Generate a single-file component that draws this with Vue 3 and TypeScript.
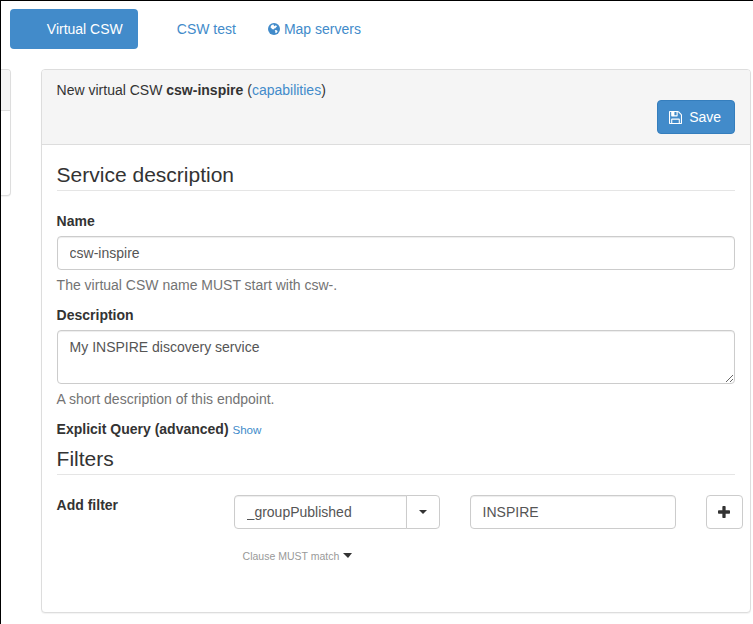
<script setup lang="ts">
import { ref } from 'vue'

const name = ref('csw-inspire')
const description = ref('My INSPIRE discovery service')
const filterField = ref('_groupPublished')
const filterValue = ref('INSPIRE')
</script>

<template>
  <div class="page">
    <nav class="pills">
      <a class="pill active">Virtual CSW</a>
      <a class="pill">CSW test</a>
      <a class="pill maps">
        <svg class="globe" viewBox="0 0 12 12">
          <circle cx="6" cy="6" r="6" fill="#428bca" />
          <path
            d="M3.400 2.200 5 1.400 6.200 1.900 5.600 2.700 6.500 3.200 7.200 2.400 8.300 2.600 9 3.800 8 4.200 7.500 5.200 6.200 5.400 5.600 6.500 4.700 5.900 4 6.400 3.600 5.200 2.500 4.500 2.800 3.200ZM6.700 7.300 8.100 7.100 9.600 7.900 9.300 9.100 8 10.200 7.300 9.800 7.300 8.500Z"
            fill="#fff"
          />
        </svg>
        Map servers
      </a>
    </nav>

    <div class="columns">
      <aside class="panel side">
        <div class="side-heading"></div>
      </aside>

      <section class="panel main">
        <header class="heading">
          <div>New virtual CSW <strong>{{ name }}</strong> (<a>capabilities</a>)</div>
          <button class="btn save" type="button">
            <svg class="floppy" viewBox="0 128 1536 1536">
              <path
                d="M384 1536h768v-384h-768v384zM1280 1536h128v-896q0-14-10-38.500t-20-34.500l-281-281q-10-10-34-20t-39-10v416q0 40-28 68t-68 28h-576q-40 0-68-28t-28-68v-416h-128v1280h128v-416q0-40 28-68t68-28h832q40 0 68 28t28 68v416zM896 608v-320q0-13-9.500-22.500t-22.500-9.500h-192q-13 0-22.500 9.500t-9.500 22.500v320q0 13 9.500 22.500t22.500 9.500h192q13 0 22.500-9.500t9.500-22.500zM1536 640v928q0 40-28 68t-68 28h-1344q-40 0-68-28t-28-68v-1344q0-40 28-68t68-28h928q40 0 88 20t76 48l280 280q28 28 48 76t20 88z"
              />
            </svg>
            <span>Save</span>
          </button>
        </header>

        <form class="body" @submit.prevent>
          <h2 class="legend">Service description</h2>

          <label class="label" for="csw-name">Name</label>
          <input id="csw-name" v-model="name" class="control" type="text" spellcheck="false" />
          <p class="help">The virtual CSW name MUST start with csw-.</p>

          <label class="label" for="csw-description">Description</label>
          <textarea id="csw-description" v-model="description" class="control area" spellcheck="false"></textarea>
          <p class="help">A short description of this endpoint.</p>

          <div class="label">Explicit Query (advanced) <a class="show">Show</a></div>

          <h2 class="legend">Filters</h2>

          <div class="filters">
            <label class="label" for="filter-field">Add filter</label>
            <div class="group">
              <input id="filter-field" v-model="filterField" class="control" type="text" spellcheck="false" />
              <button class="btn toggle" type="button"><span class="caret"></span></button>
            </div>
            <input v-model="filterValue" class="control value" type="text" spellcheck="false" />
            <button class="btn add" type="button">
              <svg class="plus" viewBox="0 192 1408 1408">
                <path
                  d="M1408 800v192q0 40-28 68t-68 28h-416v416q0 40-28 68t-68 28h-192q-40 0-68-28t-28-68v-416h-416q-40 0-68-28t-28-68v-192q0-40 28-68t68-28h416v-416q0-40 28-68t68-28h192q40 0 68 28t28 68v416h416q40 0 68 28t28 68z"
                />
              </svg>
            </button>
          </div>

          <div class="clause">Clause MUST match <span class="caret large"></span></div>
        </form>
      </section>
    </div>
  </div>
</template>

<style>
body {
  margin: 0;
  background: #fff;
  overflow: hidden;
}
</style>

<style scoped>
.page,
.page * {
  box-sizing: border-box;
}
.page {
  height: 624px;
  border-top: 1px solid #000;
  border-left: 1px solid #000;
  font-family: 'Liberation Sans', Arial, sans-serif;
  font-size: 14px;
  line-height: 20px;
  color: #333;
  overflow: hidden;
}
a {
  color: #428bca;
  text-decoration: none;
  cursor: pointer;
}
.pills {
  display: flex;
  gap: 2px;
  padding: 8px 0 0 8.8px;
}
.pill {
  display: flex;
  align-items: center;
  height: 40px;
  padding: 0 15px 0 37px;
  border-radius: 4px;
  white-space: nowrap;
}
.pill.active {
  width: 128px;
  background: #428bca;
  color: #fff;
}
.pill.maps {
  padding-left: 15px;
}
.globe {
  width: 12px;
  height: 12px;
  margin-right: 4px;
}
.columns {
  display: flex;
  align-items: flex-start;
  margin-top: 20px;
}
.panel {
  background: #fff;
  border: 1px solid #ddd;
  border-radius: 4px;
  box-shadow: 0 1px 1px rgba(0, 0, 0, 0.05);
}
.side {
  width: 10px;
  height: 127px;
  border-left: 0;
  border-radius: 0 4px 4px 0;
  overflow: hidden;
}
.side-heading {
  height: 41px;
  background: #f5f5f5;
  border-bottom: 1px solid #ddd;
}
.main {
  flex: none;
  width: 710px;
  height: 544px;
  margin-left: 29.6px;
}
.heading {
  display: flex;
  flex-direction: column;
  height: 75px;
  padding: 10px 15px;
  background: #f5f5f5;
  border-bottom: 1px solid #ddd;
  border-radius: 3px 3px 0 0;
}
.btn {
  display: flex;
  align-items: center;
  justify-content: center;
  height: 34px;
  margin: 0;
  padding: 0;
  border: 1px solid #ccc;
  border-radius: 4px;
  background: #fff;
  color: #333;
  font: inherit;
}
.save {
  align-self: flex-end;
  gap: 7px;
  width: 78px;
  padding-right: 1px;
  background: #428bca;
  border-color: #357ebd;
  color: #fff;
}
.floppy {
  width: 13px;
  height: 13px;
  fill: #fff;
}
.body {
  padding: 15px;
}
.legend {
  height: 31px;
  margin: 0 0 20px;
  border-bottom: 1px solid #e5e5e5;
  font-size: 21px;
  font-weight: 400;
  line-height: 30px;
}
.label {
  display: block;
  height: 20px;
  margin-bottom: 5px;
  font-weight: 700;
}
.control {
  display: block;
  width: 100%;
  height: 34px;
  margin: 0;
  padding: 6px 12px;
  border: 1px solid #ccc;
  border-radius: 4px;
  background: #fff;
  box-shadow: inset 0 1px 1px rgba(0, 0, 0, 0.075);
  color: #555;
  font: inherit;
  outline: none;
}
.area {
  height: 54px;
  resize: vertical;
  overflow: auto;
}
.help {
  margin: 5px 0 10px;
  color: #737373;
}
.show {
  font-size: 11.6px;
  font-weight: 400;
}
.filters {
  display: flex;
  margin-right: -8px;
}
.filters .label {
  flex: none;
  width: 177px;
}
.group {
  display: flex;
  flex: none;
  width: 206px;
}
.group .control {
  width: 173px;
  border-radius: 4px 0 0 4px;
}
.toggle {
  flex: none;
  width: 34px;
  margin-left: -1px;
  border-radius: 0 4px 4px 0;
}
.value {
  flex: none;
  width: 206px;
  margin-left: 30px;
}
.add {
  flex: none;
  width: 37px;
  margin-left: 30px;
}
.plus {
  width: 12px;
  height: 12px;
  fill: #333;
}
.caret {
  display: inline-block;
  border-top: 4px solid #333;
  border-left: 4px solid transparent;
  border-right: 4px solid transparent;
}
.caret.large {
  margin-bottom: 1px;
  border-width: 5px 4px 0 5px;
}
.clause {
  display: flex;
  align-items: center;
  gap: 3.5px;
  margin: 17px 0 0 186px;
  color: #999;
  font-size: 10.5px;
}
</style>
